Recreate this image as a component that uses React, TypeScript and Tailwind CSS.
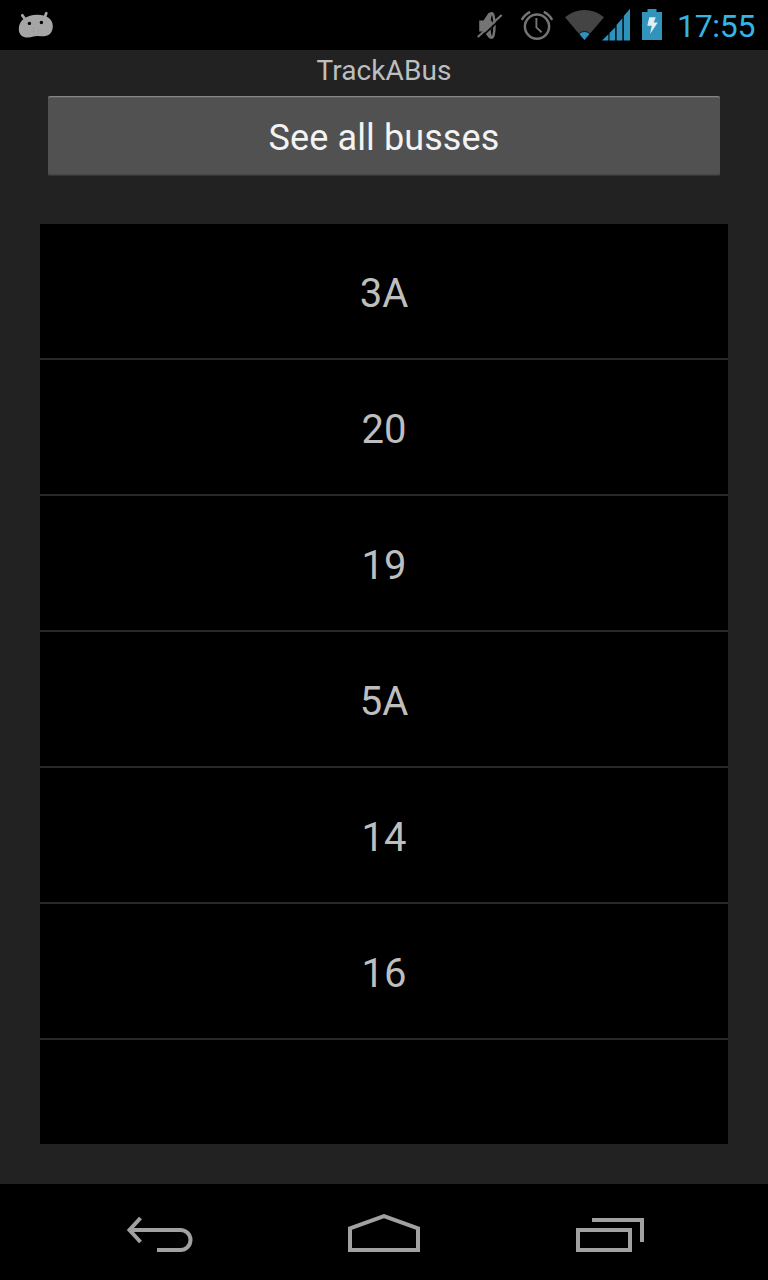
const routes = ['3A', '20', '19', '5A', '14', '16'];

function DroidIcon() {
  return (
    <svg className="h-[50px] w-[40px]" viewBox="16 0 40 50">
      <path
        d="M22.3 15.3 25 19M46.3 13.2 44.8 17"
        stroke="#a6a6a6"
        strokeWidth="2.8"
        strokeLinecap="round"
      />
      <path
        d="M37 14.8C45 14.6 52.7 18 52.8 26C52.9 31.5 50 35.6 44.5 36.2C40.5 36.5 37 35.3 33.5 36.6C31 37.5 28 37.7 25.5 37.4C21.5 36.8 18.8 33.5 18.8 29C18.8 20 27 15.1 37 14.8Z"
        fill="#a6a6a6"
      />
      <circle cx="29.4" cy="23.4" r="1.7" fill="#000" />
      <circle cx="41.4" cy="22.5" r="1.7" fill="#000" />
      <path d="M33 28.5h1M33 31.5h1M38 31h1" stroke="#929292" strokeWidth="1" />
    </svg>
  );
}

function MutedIcon() {
  return (
    <svg className="h-[50px] w-[30px]" viewBox="474 0 30 50" fill="none">
      <path d="M479.2 20.5h4.3l5-7.5q2.6-1.4 4-.4v25.5q-1.6 1.2-3.6 0l-5-6.6h-4.7z" fill="#747474" />
      <ellipse cx="491.9" cy="25.5" rx="2.6" ry="12.2" fill="#000" stroke="#747474" strokeWidth="2.4" />
      <path d="M488.6 20.5h2.6c1.6 1.5 1.6 7.5 0 9h-2.6z" fill="#747474" />
      <path d="M479.6 38.6 503.2 16.7" stroke="#000" strokeWidth="1.6" />
      <path d="M477.8 37 501.7 15" stroke="#747474" strokeWidth="2.2" />
    </svg>
  );
}

function AlarmIcon() {
  return (
    <svg className="h-[50px] w-[34px]" viewBox="520 0 34 50" fill="none" stroke="#747474">
      <circle cx="537" cy="26.6" r="12.1" strokeWidth="2.5" />
      <path d="M536.4 18v9.4l5.2 4.9" strokeWidth="1.9" />
      <path d="M521.8 19.8Q524.8 14.4 530.2 11.8M543.8 11.8Q549.2 14.4 552.2 19.8" strokeWidth="2.4" />
    </svg>
  );
}

function WifiIcon() {
  return (
    <svg className="h-[50px] w-[40px]" viewBox="564 0 40 50">
      <path d="M565 17.2Q574 10 584.5 10Q595 10 604 17.2L584.4 40.3Z" fill="#444" />
      <path d="M578.7 33.8Q584.4 29.2 590.2 33.8L584.4 40.5Z" fill="#2f92bd" stroke="#000" strokeWidth="0.8" />
    </svg>
  );
}

function SignalIcon() {
  return (
    <svg className="h-[50px] w-[30px]" viewBox="602 0 30 50" fill="#2f92bd">
      <path d="M602 40.6 608.4 34.2V40.6ZM609.5 33 615.2 27.2V40.6H609.5ZM616.6 24.8 622.4 18.2V40.6H616.6ZM623.8 16 630 8.7V40.6H623.8Z" />
    </svg>
  );
}

function BatteryIcon() {
  return (
    <svg className="h-[50px] w-[22px]" viewBox="641 0 22 50">
      <path d="M647.5 9h9v3h5.5v28h-20V12h5.5z" fill="#3293bd" />
      <path d="M649.3 17.3h6.4l-2 5.2h4.1L650 34.1l1.8-8.3h-4.5z" fill="#e1edf2" />
    </svg>
  );
}

function StatusBar() {
  return (
    <header className="flex h-[50px] shrink-0 items-center bg-black pl-4">
      <DroidIcon />
      <div className="ml-auto flex items-center pr-[12px]">
        <MutedIcon />
        <div className="w-4" />
        <AlarmIcon />
        <div className="w-2.5" />
        <WifiIcon />
        <div className="-ml-0.5 flex">
          <SignalIcon />
        </div>
        <div className="w-[9px]" />
        <BatteryIcon />
        <time className="ml-[14px] h-[50px] w-[79px] whitespace-nowrap text-[32px] leading-[52px] tracking-[-0.3px] text-[#33b5e5]">
          17:55
        </time>
      </div>
    </header>
  );
}

function NavigationBar() {
  return (
    <nav className="flex h-24 shrink-0 items-center justify-between bg-black px-[124px]">
      <button aria-label="Back">
        <svg className="h-24 w-[72px]" viewBox="124 1184 72 96" fill="none" stroke="#a1a1a1" strokeWidth="4">
          <path d="M129 1230H180.5A10 10 0 0 1 180.5 1250H157" />
          <path d="M140.5 1218 129.5 1230 140.5 1242" />
        </svg>
      </button>
      <button aria-label="Home">
        <svg className="h-24 w-[80px]" viewBox="344 1184 80 96" fill="none" stroke="#a1a1a1" strokeWidth="4">
          <path d="M350 1250V1228.4L384 1216.2 418 1228.4V1250Z" />
        </svg>
      </button>
      <button aria-label="Recent apps">
        <svg className="h-24 w-[72px]" viewBox="572 1184 72 96" fill="none" stroke="#a1a1a1" strokeWidth="4">
          <path d="M578 1230H630V1250H578ZM592 1220H642V1242" />
        </svg>
      </button>
    </nav>
  );
}

export default function App() {
  return (
    <div className="flex h-[1280px] w-[768px] flex-col overflow-hidden bg-[#222222] font-['Roboto',sans-serif]">
      <StatusBar />
      <main className="flex flex-1 flex-col px-10">
        <h1 className="h-[46px] text-center text-[28px] leading-[42px] tracking-[0.1px] text-[#bebebe]">TrackABus</h1>
        <button className="mx-2 h-20 rounded-[2px] border-t border-b border-t-[#858585] border-b-[#363636] bg-[#515151] pt-1 text-[36px] leading-[74px] tracking-[0.1px] text-[#f3f3f3] shadow-[inset_0_1px_0_#606060,inset_0_-1px_0_#464646]">
          See all busses
        </button>
        <ul className="mt-12 h-[920px] bg-black">
          {routes.map((route) => (
            <li
              key={route}
              className="flex h-[136px] items-center justify-center border-b-2 border-[#292929] pt-1.5 text-[40px] text-[#bebebe]"
            >
              {route}
            </li>
          ))}
        </ul>
      </main>
      <NavigationBar />
    </div>
  );
}
